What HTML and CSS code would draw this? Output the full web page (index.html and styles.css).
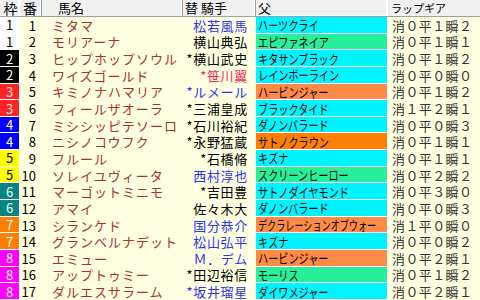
FILE: index.html
```html
<!DOCTYPE html>
<html lang="ja">
<head>
<meta charset="utf-8">
<link rel="stylesheet" href="styles.css">
</head>
<body>
<div class="sheet">
  <div class="row head">
    <div class="h waku">枠</div>
    <div class="h ban">番</div>
    <div class="h name">馬名</div>
    <div class="h jockey">替&nbsp;騎手</div>
    <div class="h sire">父</div>
    <div class="h lap">ラップギア</div>
  </div>

  <div class="row"><div class="c waku w1">1</div><div class="c num">1</div><div class="c horse">ミタマ</div><div class="c jk blue">松若風馬</div><div class="c sire cy"><span>ハーツクライ</span></div><div class="c gear">消０平１瞬２</div></div>
  <div class="row"><div class="c waku w1">1</div><div class="c num">2</div><div class="c horse">モリアーナ</div><div class="c jk">横山典弘</div><div class="c sire gr"><span>エピファネイア</span></div><div class="c gear">消０平１瞬１</div></div>
  <div class="row"><div class="c waku w2">2</div><div class="c num">3</div><div class="c horse">ヒップホップソウル</div><div class="c jk">*横山武史</div><div class="c sire cy"><span>キタサンブラック</span></div><div class="c gear">消０平１瞬２</div></div>
  <div class="row"><div class="c waku w2">2</div><div class="c num">4</div><div class="c horse">ワイズゴールド</div><div class="c jk red">*笹川翼</div><div class="c sire cy"><span>レインボーライン</span></div><div class="c gear">消０平０瞬０</div></div>
  <div class="row"><div class="c waku w3">3</div><div class="c num">5</div><div class="c horse">キミノナハマリア</div><div class="c jk blue">*ルメール</div><div class="c sire or"><span>ハービンジャー</span></div><div class="c gear">消０平１瞬２</div></div>
  <div class="row"><div class="c waku w3">3</div><div class="c num">6</div><div class="c horse">フィールザオーラ</div><div class="c jk">*三浦皇成</div><div class="c sire cy"><span>ブラックタイド</span></div><div class="c gear">消１平２瞬１</div></div>
  <div class="row"><div class="c waku w4">4</div><div class="c num">7</div><div class="c horse">ミシシッピテソーロ</div><div class="c jk">*石川裕紀</div><div class="c sire cy"><span>ダノンバラード</span></div><div class="c gear">消０平０瞬３</div></div>
  <div class="row"><div class="c waku w4">4</div><div class="c num">8</div><div class="c horse">ニシノコウフク</div><div class="c jk">*永野猛蔵</div><div class="c sire dor"><span>サトノクラウン</span></div><div class="c gear">消０平１瞬１</div></div>
  <div class="row"><div class="c waku w5">5</div><div class="c num">9</div><div class="c horse">フルール</div><div class="c jk">*石橋脩</div><div class="c sire cy"><span>キズナ</span></div><div class="c gear">消０平１瞬１</div></div>
  <div class="row"><div class="c waku w5">5</div><div class="c num">10</div><div class="c horse">ソレイユヴィータ</div><div class="c jk blue">西村淳也</div><div class="c sire gr"><span>スクリーンヒーロー</span></div><div class="c gear">消０平２瞬２</div></div>
  <div class="row"><div class="c waku w6">6</div><div class="c num">11</div><div class="c horse">マーゴットミニモ</div><div class="c jk">*吉田豊</div><div class="c sire cy"><span>サトノダイヤモンド</span></div><div class="c gear">消０平３瞬０</div></div>
  <div class="row"><div class="c waku w6">6</div><div class="c num">12</div><div class="c horse">アマイ</div><div class="c jk">佐々木大</div><div class="c sire cy"><span>ダノンバラード</span></div><div class="c gear">消０平０瞬３</div></div>
  <div class="row"><div class="c waku w7">7</div><div class="c num">13</div><div class="c horse">シランケド</div><div class="c jk blue">国分恭介</div><div class="c sire or"><span class="tight">デクラレーションオブウォー</span></div><div class="c gear">消１平０瞬０</div></div>
  <div class="row"><div class="c waku w7">7</div><div class="c num">14</div><div class="c horse">グランベルナデット</div><div class="c jk blue">松山弘平</div><div class="c sire cy"><span>キズナ</span></div><div class="c gear">消０平０瞬２</div></div>
  <div class="row"><div class="c waku w8">8</div><div class="c num">15</div><div class="c horse">エミュー</div><div class="c jk blue">Ｍ．デム</div><div class="c sire or"><span>ハービンジャー</span></div><div class="c gear">消０平２瞬１</div></div>
  <div class="row"><div class="c waku w8">8</div><div class="c num">16</div><div class="c horse">アップトゥミー</div><div class="c jk">*田辺裕信</div><div class="c sire gr"><span>モーリス</span></div><div class="c gear">消０平１瞬２</div></div>
  <div class="row"><div class="c waku w8">8</div><div class="c num">17</div><div class="c horse">ダルエスサラーム</div><div class="c jk blue">*坂井瑠星</div><div class="c sire cy"><span>ダイワメジャー</span></div><div class="c gear">消０平２瞬１</div></div>
</div>
</body>
</html>
```

FILE: styles.css
```css
html, body {
  margin: 0;
  padding: 0;
  background: #ffffe1;
}

.sheet {
  width: 480px;
  height: 300px;
  overflow: hidden;
  display: flex;
  flex-direction: column;
  background: #ffffe1;
  font-family: "Noto Sans CJK JP", "Noto Sans", sans-serif;
  font-size: 13px;
  color: #000;
}

.row {
  display: grid;
  grid-template-columns: 20px 22px 141px 73px 132px 92px;
  flex: 1 1 0;
  min-height: 0;
}

.row.head {
  flex: 0 0 17px;
  background: #f0f0f0;
  border-bottom: 1px solid #a0a0a0;
  box-sizing: border-box;
}

.h {
  display: flex;
  align-items: center;
  border-right: 1px solid #9a9a9a;
  box-shadow: inset -1px 0 0 #ffffff;
  line-height: 16px;
  height: 16px;
  padding-left: 2px;
  white-space: nowrap;
}
.h.waku { font-size: 14px; padding-left: 2px; }
.h.ban { font-size: 14px; padding-left: 3px; }
.h.name { padding-left: 16px; }
.h.jockey { padding-left: 2px; }
.h.sire { padding-left: 2px; }
.h.lap { border-right: 0; box-shadow: none; font-size: 11px; padding-left: 3px; }

.c {
  display: flex;
  align-items: center;
  white-space: nowrap;
  line-height: 15px;
}

.waku {
  justify-content: center;
  box-sizing: border-box;
  border-right: 1px solid #ffffff;
  border-bottom: 1px solid #ffffff;
  font-size: 13px;
}
.w1 { background: #ffffff; color: #000; }
.w2 { background: #000000; color: #fff; }
.w3 { background: #ff2323; color: #ffe6e6; }
.w4 { background: #0000ff; color: #fff; }
.w5 { background: #ffff00; color: #000; }
.w6 { background: #0a8480; color: #e8ffff; }
.w7 { background: #ff8000; color: #fff; }
.w8 { background: #ff00ff; color: #fff; }

.num {
  justify-content: flex-end;
  padding-right: 6px;
  font-size: 13px;
}

.horse {
  padding-left: 10px;
  color: #a83232;
  letter-spacing: 1px;
}

.jk {
  justify-content: flex-end;
  padding-right: 8px;
  letter-spacing: 0.7px;
}
.jk.blue { color: #2b35f0; }
.jk.red { color: #ff2a55; }

.sire {
  box-sizing: border-box;
  border-right: 1px solid #ffffff;
  border-bottom: 1px solid #ffffff;
  padding-left: 2px;
  overflow: hidden;
}
.sire span {
  display: inline-block;
  transform: scaleX(0.78);
  transform-origin: left center;
}
.sire span.tight {
  transform: scaleX(0.7);
}
.cy { background: #00f4ff; }
.gr { background: #28f09a; }
.or { background: #ff8a46; }
.dor { background: #ff8000; }

.gear {
  padding-left: 4px;
  color: #333333;
  letter-spacing: 0.4px;
}
```
